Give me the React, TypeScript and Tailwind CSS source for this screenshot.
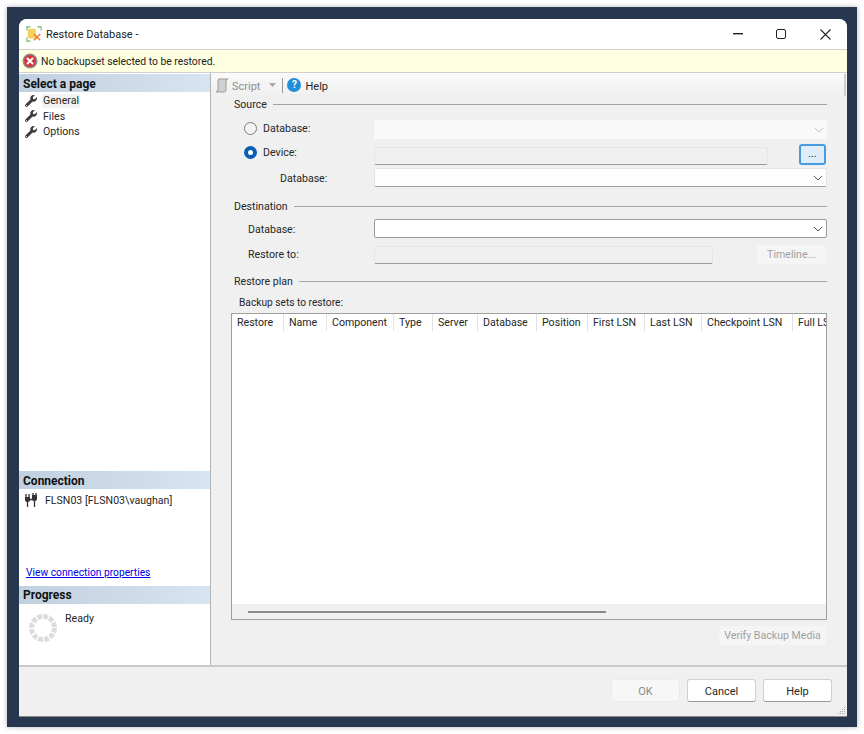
import React from "react";
import { FaWrench } from "react-icons/fa";

const font = "[font-family:'Roboto','Noto_Sans',sans-serif]";

function Chevron({ faded }: { faded?: boolean }) {
  return (
    <svg width="10" height="6" viewBox="0 0 10 6" className="shrink-0">
      <path d="M1 1l4 4 4-4" fill="none" stroke={faded ? "#c4c4c4" : "#555"} strokeWidth="1" />
    </svg>
  );
}

function Legend({ label, className }: { label: string; className: string }) {
  return (
    <div className={`flex items-center gap-[6px] h-[14px] ${className}`}>
      <span className="pt-[2px]">{label}</span>
      <div className="flex-1 h-px bg-[#a3a3a3]" />
    </div>
  );
}

function Radio({ checked }: { checked?: boolean }) {
  return checked ? (
    <span className="w-[13px] h-[13px] rounded-full bg-[#0a5fb4] flex items-center justify-center shrink-0">
      <span className="w-[5px] h-[5px] rounded-full bg-white" />
    </span>
  ) : (
    <span className="w-[13px] h-[13px] rounded-full border border-[#7a7a7a] bg-[#f4f4f4] shrink-0" />
  );
}

function Combo({ kind, className = "" }: { kind: "off" | "soft" | "on"; className?: string }) {
  const cls =
    kind === "off"
      ? "bg-[#f9f9f9]"
      : kind === "soft"
      ? "bg-[#fdfdfd] border border-[#e4e4e4] border-b-[#a0a0a0]"
      : "bg-white border border-[#9a9a9a]";
  return (
    <div className={`h-[19px] rounded-[2px] flex items-center justify-end pr-[3px] ${cls} ${className}`}>
      <Chevron faded={kind === "off"} />
    </div>
  );
}

function ReadOnly({ className = "" }: { className?: string }) {
  return <div className={`h-[18px] rounded-[2px] bg-[#f0f0f0] border border-[#e6e6e6] border-b-[#9a9a9a] ${className}`} />;
}

function PanelHeader({ label, className = "" }: { label: string; className?: string }) {
  return (
    <div className={`h-[18px] flex items-center pl-[4px] bg-gradient-to-r from-[#c1d0df] to-[#d7e4f1] font-bold text-[12px] text-[#111] shrink-0 ${className}`}>
      {label}
    </div>
  );
}

function NavItem({ label, active }: { label: string; active?: boolean }) {
  return (
    <div className="h-[15.500px] flex items-center pl-[6px] gap-[5px]">
      <FaWrench className="text-[#3b3b3b] w-[12px] h-[12px]" />
      <span className={active ? "bg-[#f3f3f3] px-px pt-[2px] pb-px" : "px-px pt-[2px]"}>{label}</span>
    </div>
  );
}

const columns: [string, number][] = [
  ["Restore", 52],
  ["Name", 43],
  ["Component", 67],
  ["Type", 39],
  ["Server", 45],
  ["Database", 59],
  ["Position", 51],
  ["First LSN", 57],
  ["Last LSN", 57],
  ["Checkpoint LSN", 91],
  ["Full LSN", 60],
];

export default function App() {
  return (
    <div className={`w-[864px] h-[734px] bg-white pt-[7px] pl-[7px] text-[10.600px] text-[#262626] leading-none ${font}`}>
      <div className="w-[850px] h-[720px] bg-[#26374f] pt-[12px] pl-[12px] shadow-[0_0_5px_rgba(0,0,0,0.3)]">
        <div className="w-[828px] h-[698px] bg-[#f0f0f0] rounded-t-[8px] flex flex-col overflow-hidden">
          {/* Title bar */}
          <div className="h-[30px] bg-white flex items-center shrink-0">
            <svg width="16" height="16" viewBox="0 0 18 18" className="ml-[7px]">
              <rect x="2" y="3" width="9" height="11" rx="1" fill="#f5cf5d" />
              <path d="M1 5V1h4M13 1h4v4M1 13v4h4" fill="none" stroke="#6fb36f" strokeWidth="1.200" />
              <path d="M9 9l7 7M16 9l-7 7" stroke="#e8772e" strokeWidth="1.600" />
            </svg>
            <span className="ml-[4px] text-[11px] text-[#222]">Restore Database -</span>
            <div className="ml-auto flex items-center">
              <svg width="10" height="2" viewBox="0 0 10 2" className="mr-[33px]">
                <rect width="10" height="1.400" fill="#222" />
              </svg>
              <div className="w-[10px] h-[10px] rounded-[2px] border border-[#222] mr-[34px]" />
              <svg width="11" height="11" viewBox="0 0 11 11" className="mr-[16px]">
                <path d="M.5.5l10 10M10.500.5l-10 10" stroke="#222" strokeWidth="1.100" />
              </svg>
            </div>
          </div>

          {/* Error bar */}
          <div className="h-[24px] bg-[#ffffe1] border-t border-b border-[#d0d0d0] flex items-center pl-[3px] gap-[3px] shrink-0">
            <svg width="16" height="16" viewBox="0 0 16 16">
              <circle cx="8" cy="8" r="7.500" fill="#8f8f8f" />
              <circle cx="8" cy="8" r="6" fill="#d2353d" />
              <path d="M5 5l6 6M11 5l-6 6" stroke="#fff" strokeWidth="2" />
            </svg>
            <span className="text-[10.350px] text-[#222] pt-[2px]">No backupset selected to be restored.</span>
          </div>

          <div className="flex flex-1 min-h-0">
            {/* Left panel */}
            <div className="w-[192px] bg-white border-r border-[#b4b4b4] flex flex-col shrink-0 pt-px">
              <PanelHeader label="Select a page" className="pt-px" />
              <div className="flex-1 pt-px">
                <NavItem label="General" active />
                <NavItem label="Files" />
                <NavItem label="Options" />
              </div>
              <PanelHeader label="Connection" className="pt-px" />
              <div className="h-[97px] flex flex-col pl-[5px]">
                <div className="flex items-center gap-[7px] pt-[4px]">
                  <svg width="14" height="14" viewBox="0 0 14 14" className="shrink-0">
                    <path d="M1 4h5v3a2 2 0 0 1-2 2H3a2 2 0 0 1-2-2zM8 2h5v4a2 2 0 0 1-2 2h-1a2 2 0 0 1-2-2z" fill="#333" />
                    <path d="M2 1v3M5 1v3M9 0v2M12 0v2M3.500 9v5M10.500 8v6M5 6.500h4" stroke="#333" strokeWidth="1.300" />
                  </svg>
                  <span className="pt-[2px]">FLSN03 [FLSN03\vaughan]</span>
                </div>
                <a className="mt-auto mb-[8px] ml-[2px] text-[10.250px] text-[#0000e6] underline">View connection properties</a>
              </div>
              <PanelHeader label="Progress" />
              <div className="h-[61px] flex pl-[9px] pt-[2px] gap-[7px]">
                <svg width="30" height="30" viewBox="0 0 30 30" className="mt-[7px] shrink-0">
                  <circle cx="15" cy="15" r="11.500" fill="none" stroke="#dcdcdc" strokeWidth="5" strokeDasharray="4.620 1.400" />
                </svg>
                <span className="mt-[8px]">Ready</span>
              </div>
            </div>

            {/* Right panel */}
            <div className="flex-1 min-w-0 flex flex-col">
              <div className="h-[24px] bg-gradient-to-b from-[#fafafa] to-[#efefef] flex items-center pl-[4px] shrink-0 pr-px">
                <svg width="14" height="15" viewBox="0 0 14 15">
                  <path d="M4 1h9l-2 2v9a2 2 0 0 1-2 2H1l2-2V2z" fill="#cfcfcf" stroke="#9b9b9b" />
                </svg>
                <span className="ml-[3px] text-[11px] text-[#8e8e8e] pt-[2px]">Script</span>
                <svg width="7" height="4" viewBox="0 0 7 4" className="ml-[9px]">
                  <path d="M0 0h7L3.500 4z" fill="#a8a8a8" />
                </svg>
                <div className="w-px h-[15px] bg-[#9a9a9a] ml-[6px]" />
                <span className="ml-[4px] w-[14px] h-[14px] rounded-full bg-[#1f8fd8] text-white font-bold text-[10px] flex items-center justify-center">?</span>
                <span className="ml-[4px] text-[11px] pt-[2px]">Help</span>
                <div className="ml-auto w-[2px] h-[22px] bg-[#d0d0d0]" />
              </div>

              <div className="pl-[23px] pr-[20px] flex-1 flex flex-col">
                <Legend label="Source" className="" />
                <div className="mt-[9px] flex items-center h-[19px]">
                  <div className="w-[140px] flex items-center gap-[6px] pl-[10px] mb-[3px]">
                    <Radio /> <span className="pt-[2px]">Database:</span>
                  </div>
                  <Combo kind="off" className="flex-1" />
                </div>
                <div className="mt-[7px] flex items-center h-[19px]">
                  <div className="w-[140px] flex items-center gap-[6px] pl-[10px] mb-[7px]">
                    <Radio checked /> <span className="pt-[2px]">Device:</span>
                  </div>
                  <ReadOnly className="w-[394px]" />
                  <div className="ml-[31px] w-[27px] h-[21px] mb-[2px] rounded-[3px] border-2 border-[#4a9ae0] bg-[#dfecf9] flex items-center justify-center">...</div>
                </div>
                <div className="mt-[3px] flex items-center h-[19px]">
                  <span className="w-[140px] pl-[46px] mt-[3px]">Database:</span>
                  <Combo kind="soft" className="flex-1" />
                </div>

                <Legend label="Destination" className="mt-[12px]" />
                <div className="mt-[6px] flex items-center h-[19px]">
                  <span className="w-[140px] pl-[14px] mt-[4px]">Database:</span>
                  <Combo kind="on" className="flex-1" />
                </div>
                <div className="mt-[7px] flex items-center h-[19px]">
                  <span className="w-[140px] pl-[14px] mt-[1px]">Restore to:</span>
                  <ReadOnly className="w-[339px]" />
                  <div className="ml-[44px] w-[69px] h-[19px] pt-[2px] rounded-[2px] bg-[#f5f5f5] text-[#a0a0a0] flex items-center justify-center">Timeline...</div>
                </div>

                <Legend label="Restore plan" className="mt-[10px]" />
                <div className="mt-[8px] pl-[5px] pt-[2px] h-[12px] flex items-center text-[10.200px]">Backup sets to restore:</div>
                <div className="mt-[5px] h-[307px] border border-[#a0a0a0] bg-white flex flex-col overflow-hidden -ml-[3px] w-[596px]">
                  <div className="h-[17px] flex shrink-0 overflow-hidden">
                    {columns.map(([name, w]) => (
                      <div
                        key={name}
                        style={{ width: w }}
                        className="h-full shrink-0 border-r border-[#e2e2e2] flex items-center pl-[5px] pt-[2px] whitespace-nowrap"
                      >
                        {name}
                      </div>
                    ))}
                  </div>
                  <div className="flex-1" />
                  <div className="h-[15px] bg-[#f0f0f0] flex items-center pl-[16px] shrink-0">
                    <div className="w-[358px] h-[2px] bg-[#8a8a8a]" />
                  </div>
                </div>
                <div className="flex justify-end mt-[6px]">
                  <div className="w-[107px] h-[19px] pt-[2px] rounded-[2px] bg-[#f5f5f5] text-[#a0a0a0] flex items-center justify-center mr-[1px]">Verify Backup Media</div>
                </div>
              </div>
            </div>
          </div>

          {/* Footer */}
          <div className="relative h-[52px] border-t-2 border-[#c8c8cf] flex items-start justify-end pt-[12px] pr-[15px] gap-[7px] shrink-0 bg-[#f0f0f0] border-b border-b-[#8a8a8a] text-[11px]">
            <div className="w-[69px] h-[23px] pt-[2px] rounded-[3px] bg-[#f7f7f7] border border-[#ececec] text-[#8a8a8a] flex items-center justify-center">OK</div>
            <div className="w-[69px] h-[23px] pt-[2px] rounded-[3px] bg-white border border-[#d0d0d0] border-b-[#9a9a9a] flex items-center justify-center">Cancel</div>
            <div className="w-[69px] h-[23px] pt-[2px] rounded-[3px] bg-white border border-[#d0d0d0] border-b-[#9a9a9a] flex items-center justify-center">Help</div>
            <svg width="9" height="9" viewBox="0 0 9 9" className="absolute right-px bottom-px">
              <path d="M7 1h1v1H7zM5 3h1v1H5zM7 3h1v1H7zM3 5h1v1H3zM5 5h1v1H5zM7 5h1v1H7zM1 7h1v1H1zM3 7h1v1H3zM5 7h1v1H5zM7 7h1v1H7z" fill="#a8a8a8" />
            </svg>
          </div>
        </div>
      </div>
    </div>
  );
}
